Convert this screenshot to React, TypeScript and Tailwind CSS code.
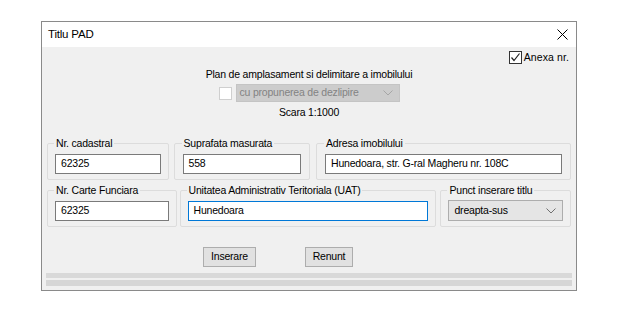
const font = { fontFamily: '"Liberation Sans", Arial, sans-serif' };

function Chevron({ color = "#606060" }: { color?: string }) {
  return (
    <svg width="10" height="6" viewBox="0 0 10 6" fill="none">
      <path d="M0.5 0.5 L5 5 L9.5 0.5" stroke={color} strokeWidth="1" />
    </svg>
  );
}

function Group({
  label,
  className,
  children,
}: {
  label: string;
  className: string;
  children: React.ReactNode;
}) {
  return (
    <fieldset className={`border border-[#dcdcdc] rounded-[2px] px-[7px] pb-[5px] ${className}`}>
      <legend className="px-[2px] ml-[-1px] text-[10.5px] tracking-[-0.2px] leading-[14px] text-black">{label}</legend>
      <div className="mt-[4px]">{children}</div>
    </fieldset>
  );
}

function Field({ value, focused }: { value: string; focused?: boolean }) {
  return (
    <div
      className={`h-[20px] bg-white border flex items-center px-[5px] text-[10.5px] tracking-[-0.2px] text-black ${
        focused ? "border-[#0078d7]" : "border-[#7a7a7a]"
      }`}
    >
      {value}
    </div>
  );
}

export default function App() {
  return (
    <div className="w-[627px] h-[314px] bg-white pt-[21px] pl-[41px]" style={font}>
      <div className="w-[536px] h-[270px] border border-[#8a8a8a] bg-[#f0f0f0] flex flex-col">
        {/* title bar */}
        <div className="h-[25px] bg-white flex items-center justify-between pl-[6px] pr-[8px]">
          <span className="text-[11.5px] tracking-[-0.2px] text-black">Titlu PAD</span>
          <svg width="11" height="11" viewBox="0 0 11 11">
            <path d="M0.5 0.5 L10.5 10.5 M10.5 0.5 L0.5 10.5" stroke="#000" strokeWidth="1" />
          </svg>
        </div>

        {/* anexa */}
        <div className="flex justify-end items-center pr-[7px] mt-[4px] h-[13px] gap-[2px]">
          <div className="w-[13px] h-[13px] border border-[#333] bg-white flex items-center justify-center">
            <svg width="11" height="11" viewBox="0 0 11 11" fill="none">
              <path d="M1.5 5.5 L4 8.5 L9.5 1.5" stroke="#222" strokeWidth="1.2" />
            </svg>
          </div>
          <span className="text-[10.5px] tracking-[0.1px] text-black">Anexa nr.</span>
        </div>

        {/* plan */}
        <div className="flex flex-col items-center mt-[3px] text-[10.5px] tracking-[-0.2px]">
          <span className="leading-[14px] text-black">
            Plan de amplasament si delimitare a imobilului
          </span>
          <div className="flex items-center gap-[4px] mt-[3px]">
            <div className="w-[13px] h-[13px] border border-[#cfcfcf] bg-white" />
            <div className="w-[164px] h-[18px] bg-[#cccccc] border border-[#c4c4c4] flex items-center justify-between pl-[3px] pr-[6px]">
              <span className="text-[#838383]">cu propunerea de dezlipire</span>
              <Chevron color="#a6a6a6" />
            </div>
          </div>
          <span className="leading-[14px] text-black mt-[3px]">Scara 1:1000</span>
        </div>

        {/* row 1 */}
        <div className="flex px-[5px] mt-[17px]">
          <Group label="Nr. cadastral" className="w-[122px]">
            <Field value="62325" />
          </Group>
          <Group label="Suprafata masurata" className="w-[137px] ml-[5px] !px-[8px]">
            <Field value="558" />
          </Group>
          <Group label="Adresa imobilului" className="w-[256px] ml-[6px] !px-[8px]">
            <Field value="Hunedoara, str. G-ral Magheru nr. 108C" />
          </Group>
        </div>

        {/* row 2 */}
        <div className="flex px-[5px] mt-[3px]">
          <Group label="Nr. Carte Funciara" className="w-[130px]">
            <Field value="62325" />
          </Group>
          <Group label="Unitatea Administrativ Teritoriala (UAT)" className="w-[258px] ml-[3px]">
            <Field value="Hunedoara" focused />
          </Group>
          <Group label="Punct inserare titlu" className="w-[131px] ml-[4px]">
            <div className="h-[21px] mt-[-1px] bg-[#e5e5e5] border border-[#adadad] flex items-center justify-between pl-[5px] pr-[6px]">
              <span className="text-[10.5px] tracking-[-0.2px] text-black">dreapta-sus</span>
              <Chevron color="#707070" />
            </div>
          </Group>
        </div>

        {/* buttons */}
        <div className="flex gap-[49px] mt-[20px] pl-[161px]">
          <button className="w-[53px] h-[20px] bg-[#e1e1e1] border border-[#adadad] text-[10.5px] tracking-[-0.2px] text-black">
            Inserare
          </button>
          <button className="w-[48px] h-[20px] bg-[#e1e1e1] border border-[#adadad] text-[10.5px] tracking-[-0.2px] text-black">
            Renunt
          </button>
        </div>

        {/* strips */}
        <div className="flex flex-col gap-[2px] mt-[6px] px-[4px]">
          <div className="h-[5px] bg-[#d9d9d9]" />
          <div className="h-[6px] bg-[#d6d6d6]" />
        </div>
      </div>
    </div>
  );
}
